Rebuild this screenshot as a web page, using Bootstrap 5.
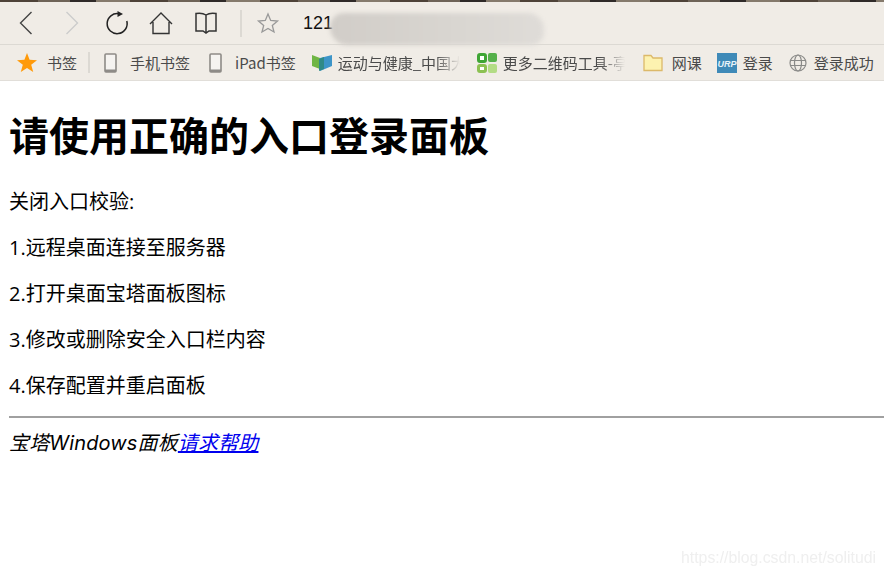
<!doctype html>
<html lang="zh">
<head>
<meta charset="utf-8">
<title>请使用正确的入口登录面板</title>
<link href="https://cdn.jsdelivr.net/npm/bootstrap@5.3.0/dist/css/bootstrap.min.css" rel="stylesheet">
<style>
html,body{height:100%;overflow:hidden}
body{background:#fff;color:#000;font-family:"Open Sans","Noto Sans CJK SC",sans-serif;font-size:20px;position:relative}
.top-strip{height:2px;background:repeating-linear-gradient(90deg,#4e4238 0 38px,#6e6357 38px 70px,#2f2a28 70px 96px,#857a6c 96px 130px)}
.tool-row{height:43px;background:#f0ece6;border-bottom:1px solid #dcd9d3;position:relative}
.tool-btn{width:24px;height:24px;flex:none}
.tool-sep{width:2px;height:27px;background:#dcd9d3;flex:none;margin:0 14px 0 22px}
.addr-text{font-family:"Liberation Sans",sans-serif;font-size:18px;color:#111;margin-left:23px;line-height:24px}
.addr-blur{position:absolute;left:330px;top:11px;width:214px;height:32px;border-radius:16px 18px 14px 20px;background:linear-gradient(90deg,#d1cdc8,#d9d6d1 60%,#dfdcd8);filter:blur(2px)}
.mark-row{height:36px;background:#f0ece6;border-bottom:1px solid #e1ded9;font-family:"Noto Sans CJK SC",sans-serif;font-size:15px;color:#4a4a4a;white-space:nowrap;overflow:hidden}
.mark-item{display:flex;align-items:center;flex:none}
.mark-item span{padding-top:2px}
.mark-fade{width:122px;-webkit-mask-image:linear-gradient(90deg,#000 80%,transparent 100%);mask-image:linear-gradient(90deg,#000 80%,transparent 100%)}
.mark-sep{width:2px;height:21px;background:#dcd9d3;margin:0 14px 0 11px;flex:none}
.page-body{padding:0 0 0 9px}
.page-title{font-family:"Noto Sans CJK SC",sans-serif;font-size:40px;font-weight:700;line-height:54px;margin:26px 0 28px;color:#000}
.page-line{font-size:20px;line-height:26px;margin:0 0 20px;color:#000}
.page-line:last-of-type{margin-bottom:17px}
.page-rule{margin:0;border:0;border-top:2px solid #a0a0a0;opacity:1}
.page-foot{font-family:"Inter","Noto Sans CJK SC",sans-serif;font-style:italic;font-size:20px;letter-spacing:.15px;line-height:26px;margin-top:12px;color:#000}
.page-foot a{color:#00e}
.wm-text{position:absolute;right:8px;top:548px;font-family:"Liberation Sans",sans-serif;font-size:15.8px;color:#efefef;line-height:20px;filter:blur(.4px)}
</style>
</head>
<body>
<div class="top-strip"></div>
<div class="tool-row d-flex align-items-center">
  <svg class="tool-btn" style="margin-left:17px" viewBox="0 0 24 24" fill="none" stroke="#444" stroke-width="1.4"><path d="M14.500 1 L3.500 12 L14.500 23"/></svg>
  <svg class="tool-btn" style="margin-left:22px" viewBox="0 0 24 24" fill="none" stroke="#ccc" stroke-width="1.4"><path d="M3.500 1 L14.500 12 L3.500 23"/></svg>
  <svg class="tool-btn" style="margin-left:18px" viewBox="0 0 24 24" fill="none" stroke="#222" stroke-width="1.5"><path d="M14 2.800 A10 10 0 1 0 21.800 10"/><path d="M12.500 0 L18 3 L12.500 6 Z" fill="#222" stroke="none"/></svg>
  <svg class="tool-btn" style="margin-left:20px" viewBox="0 0 24 24" fill="none" stroke="#333" stroke-width="1.4"><path d="M1 13 L12 2 L23 13 M4 11 V22.500 H20 V11"/></svg>
  <svg class="tool-btn" style="margin-left:21px" viewBox="0 0 24 24" fill="none" stroke="#333" stroke-width="1.5"><path d="M12 4 C9 2 5 2 2 2.500 V20 H9 L12 22 L15 20 H22 V2.500 C19 2 15 2 12 4 Z M12 4 V21"/></svg>
  <div class="tool-sep"></div>
  <svg class="tool-btn" viewBox="0 0 24 24" fill="none" stroke="#999" stroke-width="1.3"><path d="M12 3 L14.700 9.500 L21.500 10 L16.300 14.400 L18 21 L12 17.400 L6 21 L7.700 14.400 L2.500 10 L9.300 9.500 Z"/></svg>
  <span class="addr-text">121</span>
  <div class="addr-blur"></div>
</div>
<div class="mark-row d-flex align-items-center">
  <span class="mark-item" style="margin-left:17px"><svg width="20" height="20" viewBox="0 0 20 20"><path fill="#ff9a0a" d="M10 0 L12.600 6.800 L20 7.200 L14.200 11.800 L16.200 19 L10 15 L3.800 19 L5.800 11.800 L0 7.200 L7.400 6.800 Z"/></svg><span style="margin-left:10px">书签</span></span>
  <div class="mark-sep"></div>
  <span class="mark-item"><svg width="13" height="20" viewBox="0 0 13 20"><rect x="1" y="1" width="11" height="18" rx="1" fill="#f5f3f0" stroke="#8e8b87" stroke-width="1.600"/><rect x="1" y="16.500" width="11" height="2.500" fill="#8e8b87"/></svg><span style="margin-left:13px">手机书签</span></span>
  <span class="mark-item" style="margin-left:19px"><svg width="13" height="20" viewBox="0 0 13 20"><rect x="1" y="1" width="11" height="18" rx="1" fill="#f5f3f0" stroke="#8e8b87" stroke-width="1.600"/><rect x="1" y="16.500" width="11" height="2.500" fill="#8e8b87"/></svg><span style="margin-left:13px">iPad书签</span></span>
  <span class="mark-item" style="margin-left:16px"><svg width="20" height="18" viewBox="0 0 20 18"><path fill="#6fb544" d="M0 1 L8 4 V15 L0 12 Z"/><path fill="#3d95c8" d="M8 4 L20 1 V12 L8 17 Z"/><path fill="#2f8a87" d="M7 5 L12 3 V15 L7 17 Z"/></svg><span class="mark-fade" style="margin-left:6px">运动与健康_中国大</span></span>
  <span class="mark-item" style="margin-left:17px"><svg width="20" height="20" viewBox="0 0 20 20"><rect x="1.500" y="1.500" width="7" height="7" rx="1.500" fill="#fff" stroke="#3fa535" stroke-width="3"/><rect x="11" y="0" width="9" height="9" rx="2" fill="#55b04a"/><rect x="1.500" y="12.500" width="7" height="6" rx="1.500" fill="#fff" stroke="#8cc152" stroke-width="3"/><rect x="11" y="11" width="9" height="9" rx="2" fill="#b3dc85"/></svg><span class="mark-fade" style="margin-left:6px">更多二维码工具-亭</span></span>
  <span class="mark-item" style="margin-left:18px"><svg width="20" height="18" viewBox="0 0 20 18"><path fill="#fdf2b0" stroke="#dcb96a" stroke-width="1.300" d="M1 16.500 V1.500 H8 L10 4 H19 V16.500 Z"/></svg><span style="margin-left:9px">网课</span></span>
  <span class="mark-item" style="margin-left:15px"><svg width="20" height="20" viewBox="0 0 20 20"><rect width="20" height="20" fill="#3f8ab8"/><text x="10" y="14" text-anchor="middle" font-family="Liberation Sans,sans-serif" font-size="9" font-style="italic" font-weight="700" fill="#e8f2f8">URP</text></svg><span style="margin-left:6px">登录</span></span>
  <span class="mark-item" style="margin-left:16px"><svg width="18" height="18" viewBox="0 0 18 18" fill="none" stroke="#8a8a88" stroke-width="1.200"><circle cx="9" cy="9" r="8"/><ellipse cx="9" cy="9" rx="3.500" ry="8"/><path d="M1 6.500 H17 M1 11.500 H17"/></svg><span style="margin-left:7px">登录成功</span></span>
</div>
<div class="page-body">
  <h1 class="page-title">请使用正确的入口登录面板</h1>
  <p class="page-line">关闭入口校验:</p>
  <p class="page-line">1.远程桌面连接至服务器</p>
  <p class="page-line">2.打开桌面宝塔面板图标</p>
  <p class="page-line">3.修改或删除安全入口栏内容</p>
  <p class="page-line">4.保存配置并重启面板</p>
  <hr class="page-rule">
  <div class="page-foot">宝塔Windows面板<a href="#">请求帮助</a></div>
</div>
<div class="wm-text">https://blog.csdn.net/solitudi</div>
<script src="https://cdn.jsdelivr.net/npm/bootstrap@5.3.0/dist/js/bootstrap.bundle.min.js"></script>
</body>
</html>
